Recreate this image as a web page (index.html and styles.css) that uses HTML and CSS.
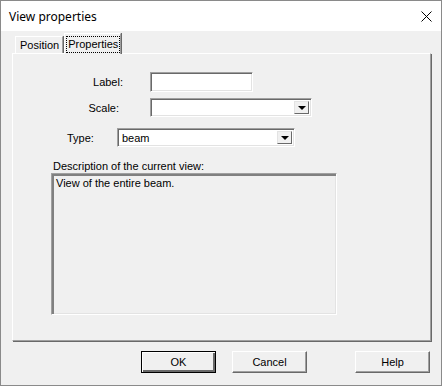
FILE: index.html
```html
<!DOCTYPE html>
<html lang="en">

<head>
    <meta charset="UTF-8">
    <meta name="viewport" content="width=device-width, initial-scale=1.0">
    <title>View properties</title>
    <link rel="stylesheet" href="styles.css">
</head>

<body>
    <div class="window">
        <header class="title-bar">
            <span class="title">View properties</span>
            <svg class="close" width="11" height="11" viewBox="0 0 11 11">
                <path d="M0.5 0.5 L10.5 10.5 M10.5 0.5 L0.5 10.5" stroke="#000" stroke-width="1" fill="none" />
            </svg>
        </header>
        <main class="dialog">
            <div class="tabs">
                <div class="tab">Position</div>
                <div class="tab selected"><span class="focus">Properties</span></div>
            </div>
            <div class="panel">
                <div class="row row-label">
                    <label class="caption">Label:</label>
                    <div class="field edit"></div>
                </div>
                <div class="row row-scale">
                    <label class="caption">Scale:</label>
                    <div class="field combo scale-combo">
                        <span class="value"></span>
                        <span class="drop"><i class="arrow"></i></span>
                    </div>
                </div>
                <div class="row row-type">
                    <label class="caption">Type:</label>
                    <div class="field combo type-combo">
                        <span class="value">beam</span>
                        <span class="drop"><i class="arrow"></i></span>
                    </div>
                </div>
                <div class="desc-label">Description of the current view:</div>
                <div class="field memo">View of the entire beam.</div>
            </div>
            <div class="buttons">
                <button class="default">OK</button>
                <button>Cancel</button>
                <button class="help">Help</button>
            </div>
        </main>
    </div>
</body>

</html>
```

FILE: styles.css
```css
body {
    margin: 0px;
    padding: 0px;
    font-family: 'Liberation Sans', Arial, sans-serif;
    font-size: 11px;
    color: #000;
}

.window {
    width: 440px;
    height: 384px;
    border: 1px solid #8a8a8a;
    background: #f0f0f0;
}

.title-bar {
    height: 30px;
    background: #fff;
    display: flex;
    align-items: center;
    justify-content: space-between;
    padding: 0 9px 0 8px;
}

.title-bar .title {
    font-family: 'Noto Sans', 'Open Sans', sans-serif;
    font-size: 12px;
    margin-top: 1px;
}

.title-bar .close {
    margin-top: 1px;
}

.dialog {
    padding: 0 10px 0 11px;
}

.tabs {
    display: flex;
    align-items: flex-end;
    height: 22px;
    padding-left: 3px;
    position: relative;
    z-index: 1;
}

.tab {
    height: 16px;
    padding: 0 3px 0 4px;
    line-height: 16px;
    border-top: 1px solid #fff;
    border-left: 1px solid #fff;
    border-right: 1px solid #a0a0a0;
    box-shadow: 1px 0 0 #696969;
}

.tab.selected {
    height: 20px;
    margin-bottom: -1px;
    margin-left: 1px;
    padding: 0 1px 0 2px;
    line-height: 20px;
    background: #f0f0f0;
}

.tab .focus {
    outline: 1px dotted #000;
    outline-offset: 0px;
    padding: 1px 1px 2px 1px;
}

.panel {
    height: 286px;
    border-top: 1px solid #fff;
    border-left: 1px solid #fff;
    border-right: 1px solid #a0a0a0;
    border-bottom: 1px solid #a0a0a0;
    box-shadow: 1px 1px 0 #696969;
}

.row {
    display: flex;
    align-items: center;
}

.row-label {
    margin-top: 18px;
}

.row-label .caption {
    width: 110px;
    text-align: right;
    margin-right: 27px;
}

.row-scale {
    margin-top: 6px;
}

.row-scale .caption {
    width: 106px;
    text-align: right;
    margin-right: 31px;
}

.row-type {
    margin-top: 11px;
    padding-left: 54px;
}

.row-type .caption {
    width: 50px;
}

.field {
    box-sizing: border-box;
    background: #fff;
    border-top: 1px solid #a0a0a0;
    border-left: 1px solid #a0a0a0;
    border-right: 1px solid #fff;
    border-bottom: 1px solid #fff;
    box-shadow: inset 1px 1px 0 #696969, inset -1px -1px 0 #e3e3e3;
}

.edit {
    width: 103px;
    height: 20px;
}

.combo {
    display: flex;
    align-items: stretch;
    padding: 2px;
}

.scale-combo {
    width: 162px;
    height: 19px;
}

.type-combo {
    width: 178px;
    height: 19px;
}

.combo .value {
    flex: 1;
    line-height: 15px;
    padding-left: 2px;
}

.combo .drop {
    width: 15px;
    display: flex;
    align-items: center;
    justify-content: center;
    background: #f0f0f0;
    border-top: 1px solid #e3e3e3;
    border-left: 1px solid #e3e3e3;
    border-right: 1px solid #696969;
    border-bottom: 1px solid #696969;
    box-sizing: border-box;
}

.arrow {
    width: 0;
    height: 0;
    border-left: 4px solid transparent;
    border-right: 4px solid transparent;
    border-top: 4px solid #000;
    margin-top: 1px;
}

.desc-label {
    margin: 13px 0 0 40px;
    line-height: 13px;
}

.memo {
    margin: 0 0 0 38px;
    width: 286px;
    height: 142px;
    background: #f0f0f0;
    padding: 3px 4px;
    border-top: 1px solid #a0a0a0;
    border-left: 1px solid #a0a0a0;
    box-shadow: inset 2px 2px 0 #808080, inset -1px -1px 0 #e3e3e3;
}

.buttons {
    display: flex;
    margin-top: 10px;
    padding-left: 129px;
}

.buttons button {
    width: 75px;
    height: 22px;
    margin-right: 16px;
    padding: 0;
    font-family: 'Liberation Sans', Arial, sans-serif;
    font-size: 11px;
    color: #000;
    background: #f0f0f0;
    border-top: 1px solid #fff;
    border-left: 1px solid #fff;
    border-right: 1px solid #696969;
    border-bottom: 1px solid #696969;
    box-shadow: inset -1px -1px 0 #a0a0a0;
}

.buttons button.default {
    border: 1px solid #000;
    box-shadow: inset 1px 1px 0 #fff, inset -2px -2px 0 #696969;
}

.buttons button.help {
    margin-left: 32px;
    margin-right: 0;
}
```
